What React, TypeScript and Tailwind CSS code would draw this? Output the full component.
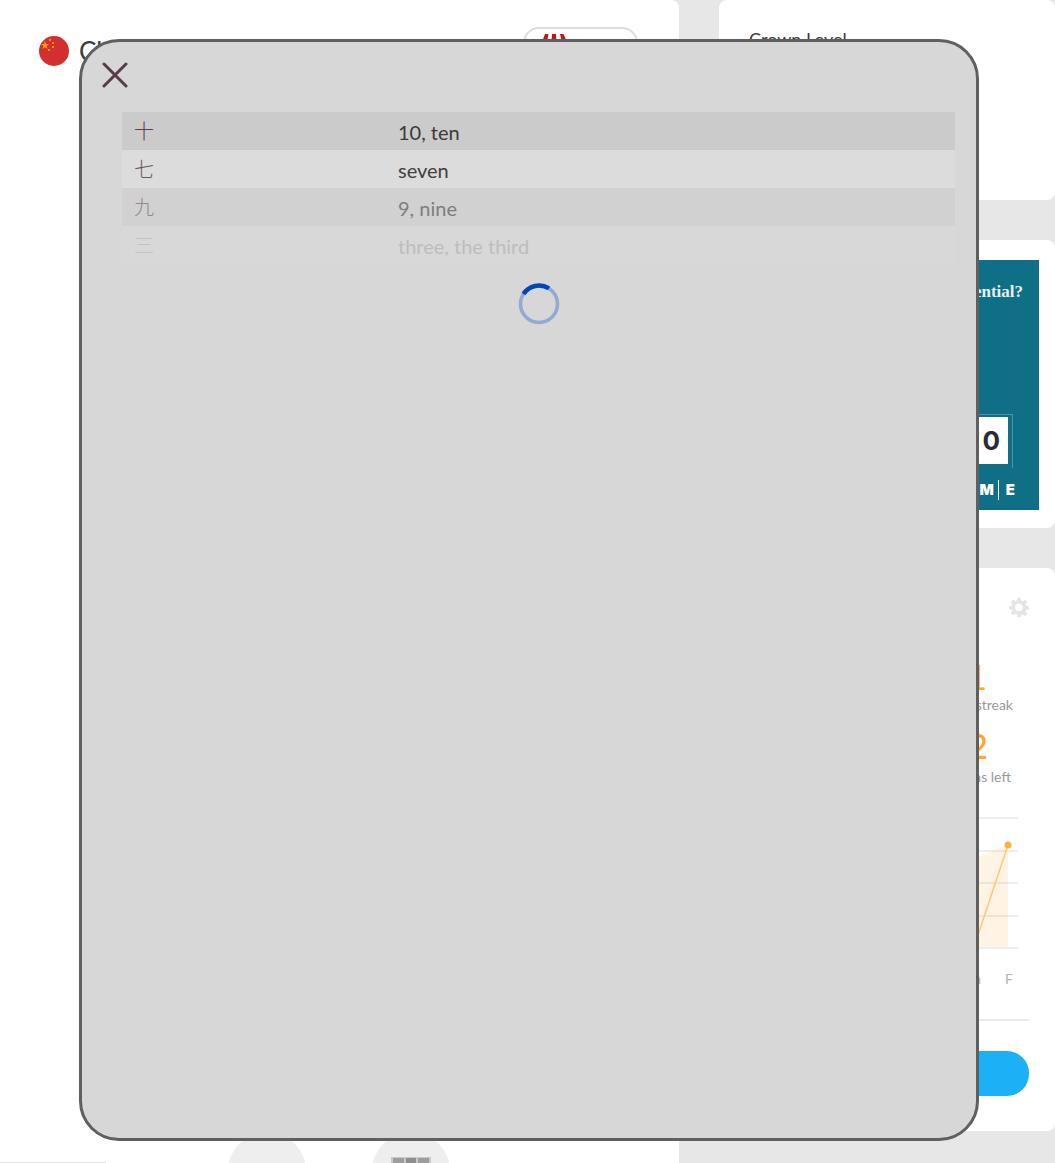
import React from "react";

const rows = [
  { zh: "十", en: "10, ten", bg: "bg-[#cbcbcb]", zc: "text-[#5c3f4c]", ec: "text-[#3a3a3a]" },
  { zh: "七", en: "seven", bg: "bg-[#dcdcdc]", zc: "text-[#6e5661]", ec: "text-[#404040]" },
  { zh: "九", en: "9, nine", bg: "bg-[#d1d1d1]", zc: "text-[#98878f]", ec: "text-[#7e7e7e]" },
  { zh: "三", en: "three, the third", bg: "bg-[#d8d8d8]", zc: "text-[#c6bfc3]", ec: "text-[#bdbdbd]" },
];

function Flag() {
  return (
    <svg width="30" height="30" viewBox="0 0 30 30" className="shrink-0">
      <circle cx="15" cy="15" r="15" fill="#d32f2f" />
      <polygon points="6,5 7,8 10,8 7.5,10 8.5,13 6,11 3.5,13 4.5,10 2,8 5,8" fill="#ffb300" />
      <circle cx="11" cy="4" r="1" fill="#ffb300" />
      <circle cx="14" cy="7" r="1" fill="#ffb300" />
      <circle cx="14" cy="11" r="1" fill="#ffb300" />
      <circle cx="10" cy="14" r="1" fill="#ffb300" />
    </svg>
  );
}

function Chart() {
  return (
    <svg width="279" height="132" viewBox="0 0 279 132" className="block">
      <g stroke="#eeeeee" strokeWidth="2">
        <line x1="0" y1="1" x2="279" y2="1" />
        <line x1="0" y1="34" x2="279" y2="34" />
        <line x1="0" y1="66" x2="279" y2="66" />
        <line x1="0" y1="99" x2="279" y2="99" />
        <line x1="0" y1="131" x2="279" y2="131" />
      </g>
      <polygon points="0,130 235,130 269,28" fill="#ffa726" fillOpacity="0.13" />
      <polygon points="235,130 269,130 269,28" fill="#ffa726" fillOpacity="0.13" />
      <polyline points="0,130 235,130 269,28" fill="none" stroke="#ffc878" strokeWidth="1.5" />
      <circle cx="269" cy="28" r="3.5" fill="#ffb23e" />
    </svg>
  );
}

export default function App() {
  return (
    <div className="relative h-[1163px] w-[1055px] overflow-hidden bg-[#e7e7e7] flex font-['Lato',sans-serif]">
      <div className="w-[679px] h-[1163px] bg-white rounded-tr-lg flex flex-col">
        <div className="flex items-start pl-[39px] pt-[27px] pr-[41px]">
          <div className="pt-[9px] flex items-center gap-[10px]">
            <Flag />
            <span className="text-[26px] leading-[30px] text-[#3c3c3c]">Chinese</span>
          </div>
          <div className="ml-auto w-[115px] h-[40px] rounded-[16px] border-2 border-[#dddddd] pl-[17px] pt-[5px]">
            <svg width="26" height="16" viewBox="0 0 26 16" className="block">
              <polygon points="3,0 6.5,0 5,8 0,8" fill="#c01818" />
              <polygon points="10,0 14,0 14.5,8 9.5,8" fill="#c01818" />
              <polygon points="18,0 21.5,0 25,8 20,8" fill="#c01818" />
            </svg>
          </div>
        </div>
        <div className="mt-auto h-[31px] overflow-hidden flex items-start">
          <div className="self-end w-[106px] h-px bg-[#dddddd]" />
          <div className="ml-[122px] flex gap-[66px]">
            <div className="w-[78px] h-[78px] rounded-full bg-[#eeeeee]" />
            <div className="w-[78px] h-[78px] rounded-full bg-[#eeeeee] flex justify-center pt-[25px]">
              <div className="w-[40px] h-[20px] bg-[#c9c9c9] flex gap-[2px] pt-[1px] px-[2px]">
                <div className="h-[8px] flex-1 bg-[#9d9d9d]" />
                <div className="h-[8px] flex-1 bg-[#8e8e8e]" />
                <div className="h-[8px] flex-1 bg-[#9d9d9d]" />
              </div>
            </div>
          </div>
        </div>
      </div>

      <div className="ml-[40px] w-[336px] flex flex-col gap-[40px]">
        <div className="h-[200px] bg-white rounded-lg pl-[30px] pt-[28px]">
          <div className="text-[18px] leading-[22px] text-[#3c3c3c]">Crown Level</div>
        </div>

        <div className="h-[288px] bg-white rounded-lg p-[20px] pr-[16px]">
          <div className="h-[250px] bg-[#0f6f86] flex flex-col items-end">
            <div className="mt-[22px] pr-[16px] font-['Liberation_Serif',serif] font-bold text-[17px] leading-[20px] text-[#e6f0f2]">
              Reach your full potential?
            </div>
            <div className="mt-[112px] mr-[26px] w-[46px] h-[54px] border-t border-r border-[#4d93a5] relative">
              <div className="absolute right-[4px] top-[2px] w-[44px] h-[47px] bg-white flex items-center justify-end pr-[8px] text-[26px] font-bold text-[#2b2b35] font-['Inter',sans-serif]">
                0
              </div>
            </div>
            <div className="mt-[12px] mr-[24px] flex items-center text-[15px] font-black leading-[18px] text-white font-['Inter',sans-serif]">
              <span className="pr-[4px]">T|M</span>
              <span className="h-[20px] w-px bg-white" />
              <span className="pl-[7px]">E</span>
            </div>
          </div>
        </div>

        <div className="h-[563px] bg-white rounded-lg flex flex-col pr-[26px]">
          <div className="flex justify-end pt-[29px] pr-0">
            <svg width="20" height="20" viewBox="0 0 24 24" fill="#e5e5e5">
              <path d="M10 1h4l.6 3.2 1.8.8L19.1 3l2.9 2.9-2 2.7.8 1.8L24 11v4l-3.2.6-.8 1.8 2 2.7-2.9 2.9-2.7-2-1.8.8L14 24h-4l-.6-3.2-1.8-.8-2.7 2L2 19.100l2-2.700-.8-1.800L0 15v-4l3.200-.6.8-1.800-2-2.700L4.900 3l2.700 2 1.800-.8zM12 8a4.500 4.500 0 1 0 0 9 4.500 4.500 0 0 0 0-9z" fillRule="evenodd" />
            </svg>
          </div>
          <div className="mt-[41px] flex flex-col items-end">
            <div className="pr-[42px] text-[34px] leading-[38px] font-medium text-[#ffa726]">11</div>
            <div className="pr-[16px] text-[14px] leading-[18px] text-[#9a9a9a]">Day streak</div>
            <div className="mt-[13px] pr-[41px] text-[34px] leading-[38px] font-medium text-[#ffa726]">12</div>
            <div className="mt-[3px] pr-[18px] text-[14px] leading-[18px] text-[#9a9a9a]">Lessons left</div>
          </div>
          <div className="mt-[31px] flex justify-end pr-[11px]">
            <Chart />
          </div>
          <div className="mt-[21px] flex justify-end gap-[24px] pr-[16px] text-[14px] leading-[18px] text-[#b5b5b5]">
            <span>Th</span>
            <span>F</span>
          </div>
          <div className="mt-[31px] ml-[20px] h-[2px] bg-[#e9e9e9]" />
          <div className="mt-[30px] ml-[20px] h-[45px] rounded-[22px] bg-[#1cb0f6]" />
        </div>
      </div>

      <div className="absolute left-[79px] top-[39px] w-[900px] h-[1102px] rounded-[40px] border-[3px] border-[#5f5f5f] bg-[#d7d7d7] pl-[40px] pr-[21px]">
        <div className="h-[70px] -ml-[20px] pt-[20px]">
          <svg width="26" height="26" viewBox="0 0 26 26" className="block">
            <path d="M2 2 L24 24 M24 2 L2 24" stroke="#5a3a49" strokeWidth="3" strokeLinecap="round" />
          </svg>
        </div>
        {rows.map((r) => (
          <div key={r.zh} className={`h-[38px] flex items-center ${r.bg}`}>
            <span className={`w-[276px] pl-[12px] text-[20px] leading-[28px] font-light font-['Noto_Sans_CJK_SC',sans-serif] ${r.zc}`}>
              {r.zh}
            </span>
            <span className={`text-[20px] leading-[28px] pt-[2px] ${r.ec}`}>{r.en}</span>
          </div>
        ))}
        <div className="mt-[19px] flex justify-center pr-[-0px]">
          <svg width="42" height="42" viewBox="0 0 42 42" className="block">
            <circle cx="21" cy="21" r="18.500" fill="none" stroke="#92a9d4" strokeWidth="3.500" />
            <path d="M5.500 11 A18.500 18.500 0 0 1 31 5.400" fill="none" stroke="#0047bb" strokeWidth="4.500" />
          </svg>
        </div>
      </div>
    </div>
  );
}
